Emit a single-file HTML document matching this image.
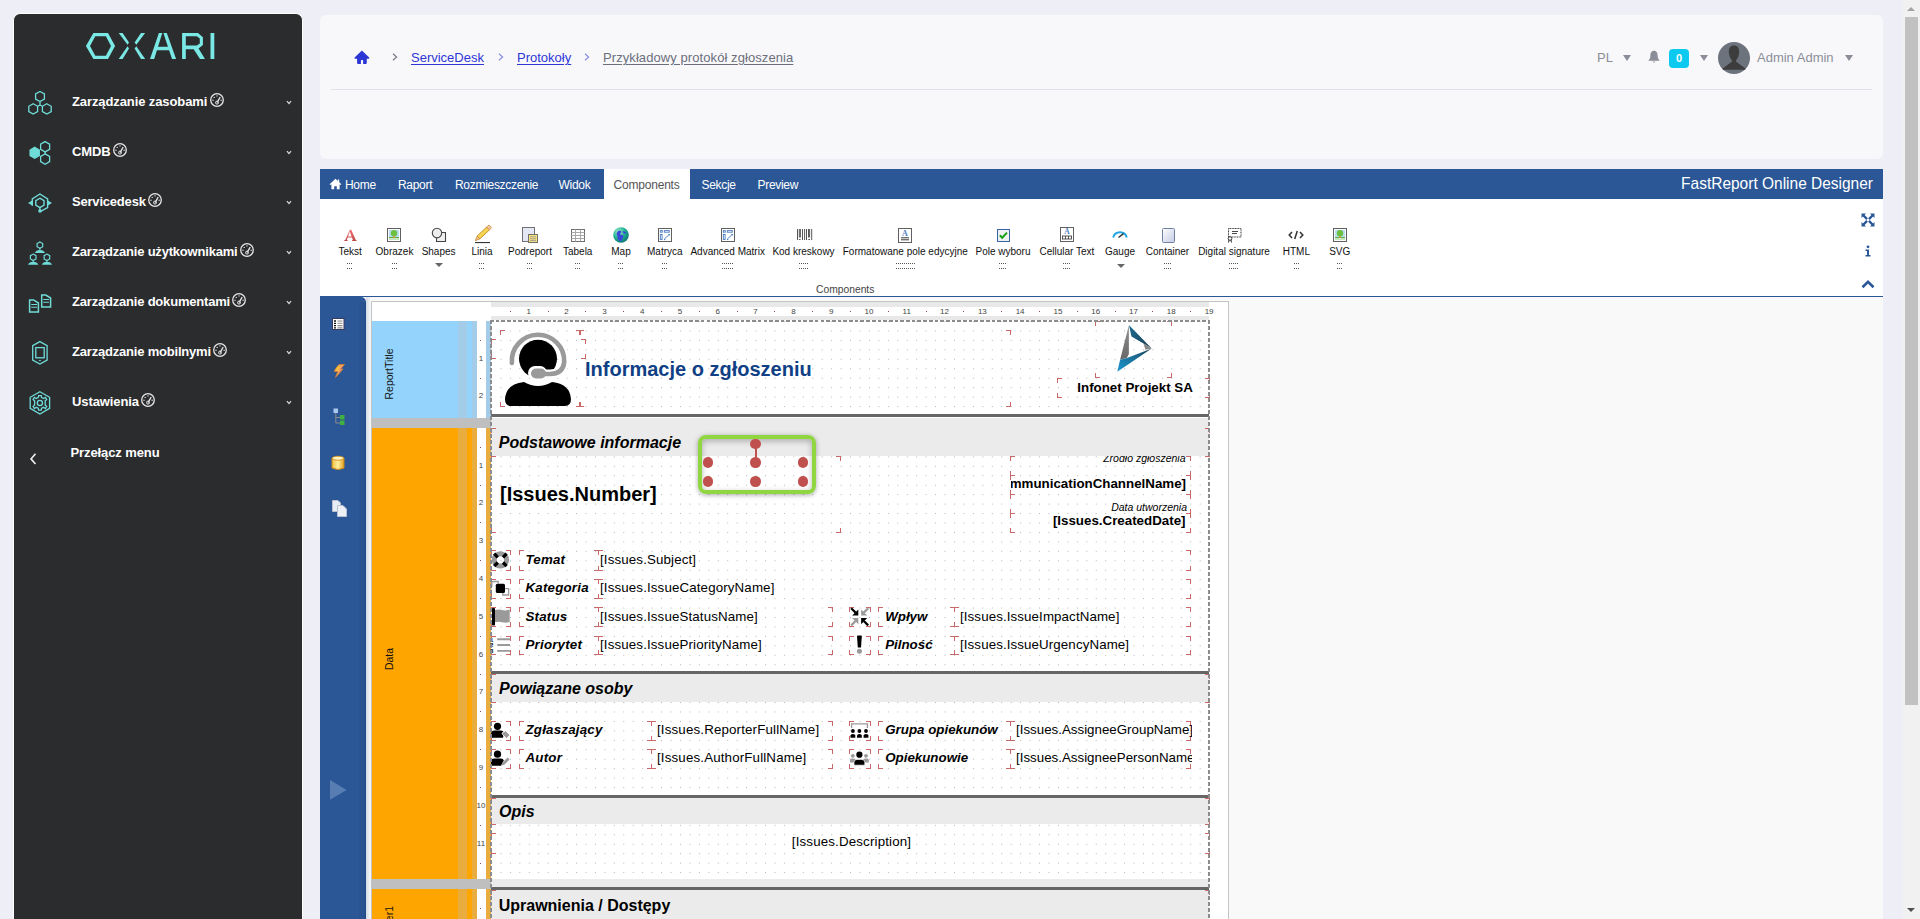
<!DOCTYPE html>
<html><head><meta charset="utf-8">
<style>
*{box-sizing:border-box;margin:0;padding:0}
html,body{width:1920px;height:919px;overflow:hidden}
body{background:#eeeef6;font-family:"Liberation Sans",sans-serif;position:relative}
.a{position:absolute}
.nw{white-space:nowrap}
/* sidebar */
#sb{left:13px;top:13px;width:290px;height:920px;background:#2b2c2e;border:1px solid #fff;border-bottom:none;border-radius:7px 7px 0 0}
.mi{position:absolute;left:72px;color:#fff;font-weight:bold;font-size:13px;letter-spacing:-0.1px;white-space:nowrap}
.chev{position:absolute;left:285px;width:6px;height:6px}
.sic{position:absolute;left:27px;width:26px;height:26px}
/* header */
#hd{left:320px;top:15px;width:1563px;height:144px;background:#f8f8fb;border-radius:6px}
.bc{position:absolute;top:50px;font-size:13px;white-space:nowrap;text-decoration:underline;text-underline-offset:1px}
/* toolbar */
#tb{left:320px;top:169px;width:1563px;height:30px;background:#2b5797}
.tab{position:absolute;top:0;height:30px;line-height:30px;color:#fff;font-size:12px;white-space:nowrap}
#rb{left:320px;top:199px;width:1563px;height:98px;background:#fff;border-bottom:1px solid #2b5797}
.ri{position:absolute;top:0;width:0}
.ri .ic{position:absolute;left:-8px;top:28px;width:16px;height:16px}
.ri .lb{position:absolute;left:-100px;width:200px;top:45px;text-align:center;font-size:10px;color:#111;white-space:nowrap}
.ri .dt{position:absolute;top:64px;height:6px;border-top:1px dotted #666;border-bottom:1px dotted #666}
.ri .dd{position:absolute;left:-5px;top:63px;width:0;height:0;border-left:5px solid transparent;border-right:5px solid transparent;border-top:5px solid #777}
/* designer */
#ds{left:320px;top:297px;width:1563px;height:622px;background:#f9f9f9}
.o{position:absolute;background:linear-gradient(#c86868,#c86868) 0 0/5px 1px no-repeat,linear-gradient(#c86868,#c86868) 0 0/1px 5px no-repeat,linear-gradient(#c86868,#c86868) 100% 0/5px 1px no-repeat,linear-gradient(#c86868,#c86868) 100% 0/1px 5px no-repeat,linear-gradient(#c86868,#c86868) 0 100%/5px 1px no-repeat,linear-gradient(#c86868,#c86868) 0 100%/1px 5px no-repeat,linear-gradient(#c86868,#c86868) 100% 100%/5px 1px no-repeat,linear-gradient(#c86868,#c86868) 100% 100%/1px 5px no-repeat}
.rn{font-size:8px;line-height:8px;color:#444}
</style></head>
<body>
<!-- SIDEBAR -->
<div id="sb" class="a"></div>
<div id="sbc" class="a" style="left:0;top:0;width:320px;height:919px">
<!-- logo -->
<svg class="a" style="left:0;top:0" width="320" height="80" viewBox="0 0 320 80"><g fill="#7ae8e4">
<path fill-rule="evenodd" d="M85.9,46 L93.4,33 H108 L115.1,46 L108,59 H93.4 Z M90,46 L95.3,36.2 H105.9 L111,46 L105.9,55.8 H95.3 Z"/>
<path d="M118.7,33 H122.6 L129,42.6 L127.6,44.8 Z"/>
<path d="M127.6,46.2 L129,48.4 L122.6,58.9 H118.7 Z"/>
<path d="M141,33 H145.1 L136.3,44.8 L134.6,42.6 Z"/>
<path d="M136.3,46.2 L134.6,48.4 L141,58.9 H145.2 Z"/>
<path d="M150,58.9 H154.2 L162.3,33 H158.9 Z"/>
<path d="M163.4,33 H166.8 L176.1,58.9 H172 Z"/>
<path d="M156.5,46.8 H169.4 L170.6,50.3 H155.4 Z"/>
<path d="M182.1,59 V33 H198 L202.9,37.2 V44.9 L198.6,48.6 L205,59 H200 L193.7,49.2 H185.8 V59 Z M185.8,36.2 V45.6 H196.8 L199.8,43.5 V38.6 L196.8,36.2 Z" fill-rule="evenodd"/>
<rect x="210.5" y="33" width="3.8" height="26"/>
</g></svg>
<!-- icons -->
<svg class="a" style="left:24px;top:86px" width="34" height="34" viewBox="0 0 34 34"><g fill="none" stroke="#6fdcd8" stroke-width="1.3">
<polygon points="16,5.5 20.4,8 20.4,13 16,15.5 11.6,13 11.6,8"/>
<polygon points="9.2,17.8 13.6,20.3 13.6,25.5 9.2,28 4.8,25.5 4.8,20.3"/>
<polygon points="22.8,17.8 27.2,20.3 27.2,25.5 22.8,28 18.4,25.5 18.4,20.3"/>
<path d="M16,15.5 V19 L13.6,20.3 M16,19 L18.4,20.3"/></g></svg>
<svg class="a" style="left:24px;top:136px" width="34" height="34" viewBox="0 0 34 34"><g fill="none" stroke="#6fdcd8" stroke-width="1.3">
<polygon points="10.7,11.3 15.3,14 15.3,19.6 10.7,22.3 6.1,19.6 6.1,14" fill="#6fdcd8"/>
<polygon points="21.1,5.6 25.6,8.2 25.6,13.3 21.1,15.9 16.6,13.3 16.6,8.2"/>
<polygon points="21.1,17.9 25.6,20.5 25.6,25.6 21.1,28.2 16.6,25.6 16.6,20.5"/>
<path d="M21.1,15.9 V17.9"/></g></svg>
<svg class="a" style="left:24px;top:186px" width="34" height="34" viewBox="0 0 34 34"><g fill="none" stroke="#6fdcd8" stroke-width="1.4">
<path d="M8.3,19.5 V13 L15.9,8 L23.6,13 V21.5 L16.5,25.3"/>
<polygon points="15.9,12.2 20,14.6 20,19.2 15.9,21.6 11.8,19.2 11.8,14.6"/>
<path d="M15.9,21.6 V24.5"/></g>
<g fill="#6fdcd8"><polygon points="4,17 9,14 9,20"/><polygon points="28,17 23,14 23,20"/><circle cx="16" cy="25" r="1.8"/></g></svg>
<svg class="a" style="left:24px;top:236px" width="34" height="34" viewBox="0 0 34 34"><g fill="none" stroke="#6fdcd8" stroke-width="1.2">
<polygon points="15.9,5.9 18.7,7.5 18.7,10.7 15.9,12.3 13.1,10.7 13.1,7.5"/>
<polygon points="9.2,18.1 12,19.7 12,22.9 9.2,24.5 6.4,22.9 6.4,19.7"/>
<polygon points="22.9,18.1 25.7,19.7 25.7,22.9 22.9,24.5 20.1,22.9 20.1,19.7"/></g>
<g fill="#6fdcd8"><path d="M10.8,17 Q12,14 15.9,14 Q19.8,14 21,17 Z"/><path d="M4,28.8 Q5.2,25.8 9.2,25.8 Q13.2,25.8 14.3,28.8 Z"/><path d="M17.8,28.8 Q19,25.8 22.9,25.8 Q26.8,25.8 28,28.8 Z"/>
<rect x="15.4" y="12" width="1" height="2"/><rect x="8.7" y="24.3" width="1" height="1.8"/><rect x="22.4" y="24.3" width="1" height="1.8"/></g></svg>
<svg class="a" style="left:24px;top:286px" width="34" height="34" viewBox="0 0 34 34"><g fill="none" stroke="#6fdcd8" stroke-width="1.5">
<path d="M5.6,26 V13.9 H9.6 L14.4,17 V26 Z"/>
<path d="M17.7,21 V9.1 H21.8 L26.6,12 V21 Z"/>
<path d="M7.2,18.5 H13 M7.2,21.3 H13 M19.3,13.5 H25 M19.3,16.3 H25" stroke-width="1.1"/></g></svg>
<svg class="a" style="left:24px;top:336px" width="34" height="34" viewBox="0 0 34 34"><g fill="none" stroke="#6fdcd8" stroke-width="1.3">
<polygon points="15.9,5.6 23.1,9.7 23.1,24 15.9,28.1 8.7,24 8.7,9.7"/>
<rect x="11.8" y="11.6" width="8.4" height="10.2"/></g><ellipse cx="15.9" cy="24.6" rx="1.2" ry="0.7" fill="#6fdcd8"/></svg>
<svg class="a" style="left:24px;top:386px" width="34" height="34" viewBox="0 0 34 34"><g fill="none" stroke="#6fdcd8" stroke-width="1.3">
<polygon points="15.9,5.8 25.6,11.3 25.6,22.4 15.9,28 6.2,22.4 6.2,11.3"/>
<circle cx="15.9" cy="16.9" r="2.6"/>
<path d="M14.6,9.6 H17.2 L17.6,11.6 L19.6,12.5 L21.4,11.3 L22.7,13.5 L21.2,14.9 V18.9 L22.7,20.3 L21.4,22.5 L19.6,21.3 L17.6,22.2 L17.2,24.2 H14.6 L14.2,22.2 L12.2,21.3 L10.4,22.5 L9.1,20.3 L10.6,18.9 V14.9 L9.1,13.5 L10.4,11.3 L12.2,12.5 L14.2,11.6 Z"/></g></svg>
<!-- labels -->
<div class="mi" style="top:95px;line-height:13px">Zarządzanie zasobami<svg width="16" height="16" viewBox="0 0 16 16" style="vertical-align:3px;margin:-5px 0 -5px 1.5px"><circle cx="8" cy="8" r="6.3" fill="none" stroke="#e6e6e6" stroke-width="1.3"/><path d="M8,10.6 L11.2,5.2" stroke="#e6e6e6" stroke-width="1.3"/><circle cx="8" cy="10.6" r="1.5" fill="none" stroke="#e6e6e6" stroke-width="1"/><circle cx="5.2" cy="5.4" r="0.7" fill="#e6e6e6"/><circle cx="8" cy="3.9" r="0.7" fill="#e6e6e6"/><circle cx="4" cy="8.3" r="0.7" fill="#e6e6e6"/><circle cx="12.1" cy="8.3" r="0.7" fill="#e6e6e6"/></svg></div>
<div class="mi" style="top:145px;line-height:13px">CMDB<svg width="16" height="16" viewBox="0 0 16 16" style="vertical-align:3px;margin:-5px 0 -5px 1.5px"><circle cx="8" cy="8" r="6.3" fill="none" stroke="#e6e6e6" stroke-width="1.3"/><path d="M8,10.6 L11.2,5.2" stroke="#e6e6e6" stroke-width="1.3"/><circle cx="8" cy="10.6" r="1.5" fill="none" stroke="#e6e6e6" stroke-width="1"/><circle cx="5.2" cy="5.4" r="0.7" fill="#e6e6e6"/><circle cx="8" cy="3.9" r="0.7" fill="#e6e6e6"/><circle cx="4" cy="8.3" r="0.7" fill="#e6e6e6"/><circle cx="12.1" cy="8.3" r="0.7" fill="#e6e6e6"/></svg></div>
<div class="mi" style="top:195px;line-height:13px;letter-spacing:-0.2px">Servicedesk<svg width="16" height="16" viewBox="0 0 16 16" style="vertical-align:3px;margin:-5px 0 -5px 1.5px"><circle cx="8" cy="8" r="6.3" fill="none" stroke="#e6e6e6" stroke-width="1.3"/><path d="M8,10.6 L11.2,5.2" stroke="#e6e6e6" stroke-width="1.3"/><circle cx="8" cy="10.6" r="1.5" fill="none" stroke="#e6e6e6" stroke-width="1"/><circle cx="5.2" cy="5.4" r="0.7" fill="#e6e6e6"/><circle cx="8" cy="3.9" r="0.7" fill="#e6e6e6"/><circle cx="4" cy="8.3" r="0.7" fill="#e6e6e6"/><circle cx="12.1" cy="8.3" r="0.7" fill="#e6e6e6"/></svg></div>
<div class="mi" style="top:245px;line-height:13px;letter-spacing:-0.2px">Zarządzanie użytkownikami<svg width="16" height="16" viewBox="0 0 16 16" style="vertical-align:3px;margin:-5px 0 -5px 1.5px"><circle cx="8" cy="8" r="6.3" fill="none" stroke="#e6e6e6" stroke-width="1.3"/><path d="M8,10.6 L11.2,5.2" stroke="#e6e6e6" stroke-width="1.3"/><circle cx="8" cy="10.6" r="1.5" fill="none" stroke="#e6e6e6" stroke-width="1"/><circle cx="5.2" cy="5.4" r="0.7" fill="#e6e6e6"/><circle cx="8" cy="3.9" r="0.7" fill="#e6e6e6"/><circle cx="4" cy="8.3" r="0.7" fill="#e6e6e6"/><circle cx="12.1" cy="8.3" r="0.7" fill="#e6e6e6"/></svg></div>
<div class="mi" style="top:295px;line-height:13px;letter-spacing:-0.2px">Zarządzanie dokumentami<svg width="16" height="16" viewBox="0 0 16 16" style="vertical-align:3px;margin:-5px 0 -5px 1.5px"><circle cx="8" cy="8" r="6.3" fill="none" stroke="#e6e6e6" stroke-width="1.3"/><path d="M8,10.6 L11.2,5.2" stroke="#e6e6e6" stroke-width="1.3"/><circle cx="8" cy="10.6" r="1.5" fill="none" stroke="#e6e6e6" stroke-width="1"/><circle cx="5.2" cy="5.4" r="0.7" fill="#e6e6e6"/><circle cx="8" cy="3.9" r="0.7" fill="#e6e6e6"/><circle cx="4" cy="8.3" r="0.7" fill="#e6e6e6"/><circle cx="12.1" cy="8.3" r="0.7" fill="#e6e6e6"/></svg></div>
<div class="mi" style="top:345px;line-height:13px;letter-spacing:-0.2px">Zarządzanie mobilnymi<svg width="16" height="16" viewBox="0 0 16 16" style="vertical-align:3px;margin:-5px 0 -5px 1.5px"><circle cx="8" cy="8" r="6.3" fill="none" stroke="#e6e6e6" stroke-width="1.3"/><path d="M8,10.6 L11.2,5.2" stroke="#e6e6e6" stroke-width="1.3"/><circle cx="8" cy="10.6" r="1.5" fill="none" stroke="#e6e6e6" stroke-width="1"/><circle cx="5.2" cy="5.4" r="0.7" fill="#e6e6e6"/><circle cx="8" cy="3.9" r="0.7" fill="#e6e6e6"/><circle cx="4" cy="8.3" r="0.7" fill="#e6e6e6"/><circle cx="12.1" cy="8.3" r="0.7" fill="#e6e6e6"/></svg></div>
<div class="mi" style="top:395px;line-height:13px">Ustawienia<svg width="16" height="16" viewBox="0 0 16 16" style="vertical-align:3px;margin:-5px 0 -5px 1.5px"><circle cx="8" cy="8" r="6.3" fill="none" stroke="#e6e6e6" stroke-width="1.3"/><path d="M8,10.6 L11.2,5.2" stroke="#e6e6e6" stroke-width="1.3"/><circle cx="8" cy="10.6" r="1.5" fill="none" stroke="#e6e6e6" stroke-width="1"/><circle cx="5.2" cy="5.4" r="0.7" fill="#e6e6e6"/><circle cx="8" cy="3.9" r="0.7" fill="#e6e6e6"/><circle cx="4" cy="8.3" r="0.7" fill="#e6e6e6"/><circle cx="12.1" cy="8.3" r="0.7" fill="#e6e6e6"/></svg></div>
<div class="mi" style="top:446px;left:70.5px;line-height:13px">Przełącz menu</div>
<svg class="a" style="left:28px;top:450px" width="10" height="18" viewBox="0 0 10 18"><path d="M7.5,3.8 L3,8.9 L7.5,14" fill="none" stroke="#f0f0f0" stroke-width="1.6"/></svg>
<svg class="a" style="left:285px;top:99px" width="8" height="6" viewBox="0 0 8 6"><path d="M2,2.2 L4,4.6 L6,2.2" fill="none" stroke="#d8d8d8" stroke-width="1.3"/></svg>
<svg class="a" style="left:285px;top:149px" width="8" height="6" viewBox="0 0 8 6"><path d="M2,2.2 L4,4.6 L6,2.2" fill="none" stroke="#d8d8d8" stroke-width="1.3"/></svg>
<svg class="a" style="left:285px;top:199px" width="8" height="6" viewBox="0 0 8 6"><path d="M2,2.2 L4,4.6 L6,2.2" fill="none" stroke="#d8d8d8" stroke-width="1.3"/></svg>
<svg class="a" style="left:285px;top:249px" width="8" height="6" viewBox="0 0 8 6"><path d="M2,2.2 L4,4.6 L6,2.2" fill="none" stroke="#d8d8d8" stroke-width="1.3"/></svg>
<svg class="a" style="left:285px;top:299px" width="8" height="6" viewBox="0 0 8 6"><path d="M2,2.2 L4,4.6 L6,2.2" fill="none" stroke="#d8d8d8" stroke-width="1.3"/></svg>
<svg class="a" style="left:285px;top:349px" width="8" height="6" viewBox="0 0 8 6"><path d="M2,2.2 L4,4.6 L6,2.2" fill="none" stroke="#d8d8d8" stroke-width="1.3"/></svg>
<svg class="a" style="left:285px;top:399px" width="8" height="6" viewBox="0 0 8 6"><path d="M2,2.2 L4,4.6 L6,2.2" fill="none" stroke="#d8d8d8" stroke-width="1.3"/></svg>
</div>

<!-- HEADER -->
<div id="hd" class="a"></div>
<svg class="a" style="left:350px;top:46px" width="24" height="22" viewBox="350 46 24 22"><path d="M361.9,50.6 L354.6,57.4 Q354,58.7 355.4,58.7 H357.1 V63.1 Q357.1,63.9 357.9,63.9 H360.9 V60.5 Q360.9,59.9 361.5,59.9 H362.5 Q363.1,59.9 363.1,60.5 V63.9 H366 Q366.8,63.9 366.8,63.1 V58.7 H368.4 Q369.8,58.7 369.2,57.4 Z" fill="#2b36d4"/></svg>
<svg class="a" style="left:390px;top:52px" width="10" height="10" viewBox="0 0 10 10"><path d="M3,1.8 L6.6,5 L3,8.2" fill="none" stroke="#777a84" stroke-width="1.2"/></svg>
<div class="a nw" style="left:411px;top:50.8px;font-size:13px;line-height:13px;color:#2f36d6;text-decoration:underline;text-underline-offset:1.5px">ServiceDesk</div>
<svg class="a" style="left:496px;top:52px" width="10" height="10" viewBox="0 0 10 10"><path d="M3,1.8 L6.6,5 L3,8.2" fill="none" stroke="#8a8fe0" stroke-width="1.2"/></svg>
<div class="a nw" style="left:517px;top:50.8px;font-size:13px;line-height:13px;color:#2f36d6;text-decoration:underline;text-underline-offset:1.5px">Protokoły</div>
<svg class="a" style="left:582px;top:52px" width="10" height="10" viewBox="0 0 10 10"><path d="M3,1.8 L6.6,5 L3,8.2" fill="none" stroke="#8a8fe0" stroke-width="1.2"/></svg>
<div class="a nw" style="left:603px;top:50.8px;font-size:13px;line-height:13px;color:#6c6f7b;letter-spacing:0.08px;text-decoration:underline;text-underline-offset:1.5px">Przykładowy protokół zgłoszenia</div>
<div class="a" style="left:331px;top:89px;width:1541px;height:1px;background:#dfe1e8"></div>
<div class="a nw" style="left:1597px;top:51px;font-size:13px;line-height:13px;color:#8b8e98">PL</div>
<div class="a" style="left:1623px;top:55px;width:0;height:0;border-left:4px solid transparent;border-right:4px solid transparent;border-top:6px solid #8b8e98"></div>
<svg class="a" style="left:1646px;top:49px" width="16" height="16" viewBox="0 0 16 16"><path d="M8,1.8 C5.2,1.8 4.4,4.2 4.4,6.5 C4.4,9.2 3.4,10.6 2.2,11.8 H13.8 C12.6,10.6 11.6,9.2 11.6,6.5 C11.6,4.2 10.8,1.8 8,1.8 Z" fill="#8b8e98"/><path d="M6.6,12.6 Q8,14.8 9.4,12.6 Z" fill="#8b8e98"/></svg>
<div class="a" style="left:1669px;top:49px;width:20px;height:19px;background:#0bc9ef;border-radius:4px;color:#fff;font-size:11px;font-weight:bold;line-height:19px;text-align:center">0</div>
<div class="a" style="left:1700px;top:55px;width:0;height:0;border-left:4px solid transparent;border-right:4px solid transparent;border-top:6px solid #8b8e98"></div>
<svg class="a" style="left:1718px;top:42px" width="32" height="32" viewBox="0 0 32 32"><defs><clipPath id="avc"><circle cx="16" cy="16" r="16"/></clipPath></defs><circle cx="16" cy="16" r="16" fill="#6c737c"/><g clip-path="url(#avc)" fill="#3d3d3d"><path d="M16,3.5 C12.4,3.5 10.8,6.2 10.8,9.6 C10.8,13.6 12.6,17 14,18.5 V19.6 L3,27.8 H29 L18,19.6 V18.5 C19.4,17 21.2,13.6 21.2,9.6 C21.2,6.2 19.6,3.5 16,3.5 Z"/></g></svg>
<div class="a nw" style="left:1757px;top:51.3px;font-size:13px;line-height:13px;color:#8b8e98">Admin Admin</div>
<div class="a" style="left:1845px;top:55px;width:0;height:0;border-left:4px solid transparent;border-right:4px solid transparent;border-top:6px solid #8b8e98"></div>


<!-- TOOLBAR -->
<div id="tb" class="a"></div>
<div id="rb" class="a"></div>
<div class="a" style="left:604px;top:169px;width:86px;height:30px;background:#fff"></div>
<svg class="a" style="left:329px;top:178px" width="13" height="12" viewBox="0 0 13 12"><path d="M6.5,0.8 L0.6,6.2 L1.5,7.1 L2.4,6.3 V11.2 H5.2 V8.2 H7.8 V11.2 H10.6 V6.3 L11.5,7.1 L12.4,6.2 L10.2,4.2 V1.4 H8.8 V2.9 Z" fill="#fff"/></svg>
<div class="a nw" style="left:345px;top:179px;font-size:12px;line-height:12px;letter-spacing:-0.3px;color:#fff">Home</div>
<div class="a nw" style="left:398px;top:179px;font-size:12px;line-height:12px;letter-spacing:-0.3px;color:#fff">Raport</div>
<div class="a nw" style="left:455px;top:179px;font-size:12px;line-height:12px;letter-spacing:-0.3px;color:#fff">Rozmieszczenie</div>
<div class="a nw" style="left:558.5px;top:179px;font-size:12px;line-height:12px;letter-spacing:-0.3px;color:#fff">Widok</div>
<div class="a nw" style="left:701.5px;top:179px;font-size:12px;line-height:12px;letter-spacing:-0.3px;color:#fff">Sekcje</div>
<div class="a nw" style="left:757.5px;top:179px;font-size:12px;line-height:12px;letter-spacing:-0.3px;color:#fff">Preview</div>
<div class="a nw" style="left:613.5px;top:179px;font-size:12px;line-height:12px;letter-spacing:-0.2px;color:#555">Components</div>
<div class="a nw" style="left:1473px;width:400px;text-align:right;top:176.4px;font-size:16.6px;line-height:16.6px;color:#fff;transform:scaleX(0.933);transform-origin:100% 50%">FastReport Online Designer</div>
<svg class="a" style="left:343px;top:228px" width="15" height="15" viewBox="0 0 15 15"><defs><linearGradient id="ga" x1="0" y1="0" x2="0" y2="1"><stop offset="0" stop-color="#f07070"/><stop offset="1" stop-color="#c04848"/></linearGradient></defs><path d="M1.2,13 H4.6 V12.3 L3.8,12.1 L4.6,9.6 H9 L9.9,12.1 L9,12.3 V13 H13.6 V12.3 L12.8,12.1 L8.2,1.8 H6.9 L2.2,12.1 L1.2,12.3 Z M5,8.4 L6.8,3.6 L8.6,8.4 Z" fill="url(#ga)"/></svg>
<div class="a nw" style="left:250.10000000000002px;top:247.2px;width:200px;text-align:center;font-size:10px;line-height:10px;color:#111">Tekst</div>
<div class="a" style="left:347px;top:263px;width:6px;height:1px;background:repeating-linear-gradient(90deg,#555 0 1px,transparent 1px 2px)"></div>
<div class="a" style="left:347px;top:268px;width:6px;height:1px;background:repeating-linear-gradient(90deg,#555 0 1px,transparent 1px 2px)"></div>
<svg class="a" style="left:387px;top:228px" width="14" height="14" viewBox="0 0 14 14"><rect x="0.5" y="0.5" width="13" height="13" fill="#fff" stroke="#606060"/><rect x="2" y="2" width="10" height="8" fill="#b8dcf6"/><rect x="2" y="9" width="10" height="3" fill="#c8e6c0"/><rect x="2" y="9" width="10" height="1" fill="#5cb040"/><circle cx="7" cy="5.3" r="3.2" fill="#6cc040"/><rect x="6.3" y="8" width="1.4" height="2" fill="#e89040"/></svg>
<div class="a nw" style="left:294.5px;top:247.2px;width:200px;text-align:center;font-size:10px;line-height:10px;color:#111">Obrazek</div>
<div class="a" style="left:391.5px;top:263px;width:5.5px;height:1px;background:repeating-linear-gradient(90deg,#555 0 1px,transparent 1px 2px)"></div>
<div class="a" style="left:391.5px;top:268px;width:5.5px;height:1px;background:repeating-linear-gradient(90deg,#555 0 1px,transparent 1px 2px)"></div>
<svg class="a" style="left:430px;top:227px" width="17" height="16" viewBox="0 0 17 16"><path d="M6.5,9.5 V14.5 H15.5 V5.5 H12" fill="#efefef" stroke="#444" stroke-width="1.1"/><circle cx="7" cy="6" r="4.7" fill="#eee" stroke="#444" stroke-width="1.1"/></svg>
<div class="a nw" style="left:338.6px;top:247.2px;width:200px;text-align:center;font-size:10px;line-height:10px;color:#111">Shapes</div>
<div class="a" style="left:435px;top:263px;width:0;height:0;border-left:4px solid transparent;border-right:4px solid transparent;border-top:4px solid #666"></div>
<svg class="a" style="left:472px;top:224px" width="22" height="22" viewBox="472 224 22 22"><path d="M477.1,236.1 L486.6,227.1 L489.4,229.9 L479.9,238.9 Z" fill="#f5d650" stroke="#c8862a" stroke-width="0.9"/><path d="M477.1,236.1 L479.9,238.9 L475.3,240.7 Z" fill="#f0c8a0" stroke="#c8862a" stroke-width="0.8"/><path d="M486.6,227.1 L488,225.7 Q489,224.9 490,225.9 L490.9,226.8 Q491.8,227.8 490.8,228.5 L489.4,229.9 Z" fill="#f6c8b0" stroke="#c8862a" stroke-width="0.8"/><rect x="475" y="242" width="15" height="1.1" fill="#333"/></svg>
<div class="a nw" style="left:382px;top:247.2px;width:200px;text-align:center;font-size:10px;line-height:10px;color:#111">Linia</div>
<div class="a" style="left:479px;top:263px;width:6px;height:1px;background:repeating-linear-gradient(90deg,#555 0 1px,transparent 1px 2px)"></div>
<div class="a" style="left:479px;top:268px;width:6px;height:1px;background:repeating-linear-gradient(90deg,#555 0 1px,transparent 1px 2px)"></div>
<svg class="a" style="left:522px;top:227px" width="17" height="17" viewBox="0 0 17 17"><rect x="0.5" y="0.5" width="12" height="14" fill="#e4e8f4" stroke="#707070"/><rect x="6.5" y="7.5" width="9" height="8" fill="#f7e27a" stroke="#707070"/><path d="M8,9.8 H14 M8,11.8 H14 M8,13.6 H14" stroke="#9a9a9a" stroke-width="0.9"/></svg>
<div class="a nw" style="left:430px;top:247.2px;width:200px;text-align:center;font-size:10px;line-height:10px;color:#111">Podreport</div>
<div class="a" style="left:527px;top:263px;width:6px;height:1px;background:repeating-linear-gradient(90deg,#555 0 1px,transparent 1px 2px)"></div>
<div class="a" style="left:527px;top:268px;width:6px;height:1px;background:repeating-linear-gradient(90deg,#555 0 1px,transparent 1px 2px)"></div>
<svg class="a" style="left:571px;top:229px" width="14" height="13" viewBox="0 0 14 13"><rect x="0.5" y="0.5" width="13" height="12" fill="#fff" stroke="#707070"/><path d="M4.5,0.5 V12.5 M9.5,0.5 V12.5 M0.5,3.5 H13.5 M0.5,6.5 H13.5 M0.5,9.5 H13.5" stroke="#a8a8a8"/></svg>
<div class="a nw" style="left:477.70000000000005px;top:247.2px;width:200px;text-align:center;font-size:10px;line-height:10px;color:#111">Tabela</div>
<div class="a" style="left:574.5px;top:263px;width:5.5px;height:1px;background:repeating-linear-gradient(90deg,#555 0 1px,transparent 1px 2px)"></div>
<div class="a" style="left:574.5px;top:268px;width:5.5px;height:1px;background:repeating-linear-gradient(90deg,#555 0 1px,transparent 1px 2px)"></div>
<svg class="a" style="left:613px;top:227px" width="16" height="16" viewBox="0 0 16 16"><defs><radialGradient id="gm" cx="0.35" cy="0.3" r="0.8"><stop offset="0" stop-color="#a0f0d0"/><stop offset="0.5" stop-color="#20b090"/><stop offset="1" stop-color="#0a6a70"/></radialGradient></defs><circle cx="8" cy="8" r="7.8" fill="url(#gm)"/><path d="M5,4 Q8,2.5 8.5,5 Q6.5,6.5 7.5,8 Q10,7 10.5,9.5 Q9.5,13 7,14.5 Q4,12 4.5,9 Q2.5,7 5,4 Z" fill="#3a48d8"/><path d="M9.5,4.5 Q12,3.5 13.5,6 Q12,7 10.5,6.5 Z" fill="#3a48d8"/></svg>
<div class="a nw" style="left:521px;top:247.2px;width:200px;text-align:center;font-size:10px;line-height:10px;color:#111">Map</div>
<div class="a" style="left:618px;top:263px;width:6px;height:1px;background:repeating-linear-gradient(90deg,#555 0 1px,transparent 1px 2px)"></div>
<div class="a" style="left:618px;top:268px;width:6px;height:1px;background:repeating-linear-gradient(90deg,#555 0 1px,transparent 1px 2px)"></div>
<svg class="a" style="left:658px;top:228px" width="14" height="14" viewBox="0 0 14 14"><rect x="0.5" y="0.5" width="13" height="13" fill="#fff" stroke="#606060"/><g fill="none" stroke="#4a7ac0" stroke-width="0.9"><rect x="2.3" y="2.6" width="2" height="1.6"/><rect x="6.3" y="2.6" width="5" height="1.6"/><rect x="2.3" y="6.5" width="1.8" height="5"/><path d="M6.5,10.8 L10.8,7"/></g><path d="M10,6 L12,6 L11.6,8 Z M5.8,10.4 L6.2,12.2 L7.8,11.6 Z" fill="#4a7ac0"/></svg>
<div class="a nw" style="left:564.8px;top:247.2px;width:200px;text-align:center;font-size:10px;line-height:10px;color:#111">Matryca</div>
<div class="a" style="left:662px;top:263px;width:5px;height:1px;background:repeating-linear-gradient(90deg,#555 0 1px,transparent 1px 2px)"></div>
<div class="a" style="left:662px;top:268px;width:5px;height:1px;background:repeating-linear-gradient(90deg,#555 0 1px,transparent 1px 2px)"></div>
<svg class="a" style="left:721px;top:228px" width="14" height="14" viewBox="0 0 14 14"><rect x="0.5" y="0.5" width="13" height="13" fill="#fff" stroke="#606060"/><g fill="none" stroke="#4a7ac0" stroke-width="0.9"><rect x="2.3" y="2.6" width="2" height="1.6"/><rect x="6.3" y="2.6" width="5" height="1.6"/><rect x="2.3" y="6.5" width="1.8" height="5"/><path d="M6.5,10.8 L10.8,7"/></g><path d="M10,6 L12,6 L11.6,8 Z M5.8,10.4 L6.2,12.2 L7.8,11.6 Z" fill="#4a7ac0"/></svg>
<div class="a nw" style="left:627.7px;top:247.2px;width:200px;text-align:center;font-size:10px;line-height:10px;color:#111">Advanced Matrix</div>
<div class="a" style="left:722px;top:263px;width:11px;height:1px;background:repeating-linear-gradient(90deg,#555 0 1px,transparent 1px 2px)"></div>
<div class="a" style="left:722px;top:268px;width:11px;height:1px;background:repeating-linear-gradient(90deg,#555 0 1px,transparent 1px 2px)"></div>
<svg class="a" style="left:797px;top:229px" width="16" height="12" viewBox="0 0 16 12"><path d="M0.5,0 V11 M2.3,0 V8.5 M3.4,0 V8.5 M5.5,0 V11 M7.6,0 V11 M9.5,0 V11 M11.5,0 V8.5 M12.6,0 V8.5 M14.7,0 V11" stroke="#444" stroke-width="0.9"/><path d="M2,10.5 H3.6 M11.3,10.5 H13" stroke="#444" stroke-width="0.9"/></svg>
<div class="a nw" style="left:703.5px;top:247.2px;width:200px;text-align:center;font-size:10px;line-height:10px;color:#111">Kod kreskowy</div>
<div class="a" style="left:799px;top:263px;width:9px;height:1px;background:repeating-linear-gradient(90deg,#555 0 1px,transparent 1px 2px)"></div>
<div class="a" style="left:799px;top:268px;width:9px;height:1px;background:repeating-linear-gradient(90deg,#555 0 1px,transparent 1px 2px)"></div>
<svg class="a" style="left:898px;top:228px" width="15" height="15" viewBox="0 0 15 15"><rect x="0.5" y="0.5" width="13" height="14" fill="#fff" stroke="#606060"/><text x="7" y="8" font-family="Liberation Serif" font-size="8" font-weight="bold" fill="#5080c0" text-anchor="middle">A</text><path d="M3,9.8 H11 M3,11.8 H11" stroke="#222" stroke-width="0.9"/></svg>
<div class="a nw" style="left:805.3px;top:247.2px;width:200px;text-align:center;font-size:10px;line-height:10px;color:#111">Formatowane pole edycyjne</div>
<div class="a" style="left:896px;top:263px;width:19px;height:1px;background:repeating-linear-gradient(90deg,#555 0 1px,transparent 1px 2px)"></div>
<div class="a" style="left:896px;top:268px;width:19px;height:1px;background:repeating-linear-gradient(90deg,#555 0 1px,transparent 1px 2px)"></div>
<svg class="a" style="left:997px;top:229px" width="13" height="13" viewBox="0 0 13 13"><rect x="0.5" y="0.5" width="12" height="12" fill="#eef0f2" stroke="#3a64a8"/><path d="M2.8,6.2 L5.2,8.8 L10,3.6" fill="none" stroke="#18a018" stroke-width="2"/></svg>
<div class="a nw" style="left:903px;top:247.2px;width:200px;text-align:center;font-size:10px;line-height:10px;color:#111">Pole wyboru</div>
<div class="a" style="left:999px;top:263px;width:8px;height:1px;background:repeating-linear-gradient(90deg,#555 0 1px,transparent 1px 2px)"></div>
<div class="a" style="left:999px;top:268px;width:8px;height:1px;background:repeating-linear-gradient(90deg,#555 0 1px,transparent 1px 2px)"></div>
<svg class="a" style="left:1060px;top:227px" width="14" height="15" viewBox="0 0 14 15"><rect x="0.5" y="0.5" width="13" height="14" fill="#fff" stroke="#606060"/><text x="7" y="7" font-family="Liberation Serif" font-size="7.5" font-weight="bold" fill="#5080c0" text-anchor="middle">A</text><g fill="none" stroke="#444" stroke-width="0.9"><rect x="2.5" y="9" width="9" height="3"/><path d="M5.5,9 V12 M8.5,9 V12"/></g></svg>
<div class="a nw" style="left:966.9000000000001px;top:247.2px;width:200px;text-align:center;font-size:10px;line-height:10px;color:#111">Cellular Text</div>
<div class="a" style="left:1063px;top:263px;width:8px;height:1px;background:repeating-linear-gradient(90deg,#555 0 1px,transparent 1px 2px)"></div>
<div class="a" style="left:1063px;top:268px;width:8px;height:1px;background:repeating-linear-gradient(90deg,#555 0 1px,transparent 1px 2px)"></div>
<svg class="a" style="left:1112px;top:229px" width="16" height="10" viewBox="0 0 16 10"><path d="M1.2,8.6 A7,7 0 0 1 14.8,8.6" fill="none" stroke="#1ea6e0" stroke-width="2"/><path d="M6.5,8.5 L11.5,4.6" stroke="#333" stroke-width="1.5"/></svg>
<div class="a nw" style="left:1020px;top:247.2px;width:200px;text-align:center;font-size:10px;line-height:10px;color:#111">Gauge</div>
<div class="a" style="left:1116.5px;top:263.5px;width:0;height:0;border-left:4px solid transparent;border-right:4px solid transparent;border-top:4px solid #666"></div>
<svg class="a" style="left:1162px;top:228px" width="13" height="15" viewBox="0 0 13 15"><defs><linearGradient id="gc" x1="0" y1="0" x2="1" y2="1"><stop offset="0" stop-color="#fff"/><stop offset="1" stop-color="#c4cce4"/></linearGradient></defs><rect x="0.5" y="0.5" width="12" height="14" rx="1" fill="url(#gc)" stroke="#7080a0"/></svg>
<div class="a nw" style="left:1067.5px;top:247.2px;width:200px;text-align:center;font-size:10px;line-height:10px;color:#111">Container</div>
<div class="a" style="left:1164px;top:263px;width:7px;height:1px;background:repeating-linear-gradient(90deg,#555 0 1px,transparent 1px 2px)"></div>
<div class="a" style="left:1164px;top:268px;width:7px;height:1px;background:repeating-linear-gradient(90deg,#555 0 1px,transparent 1px 2px)"></div>
<svg class="a" style="left:1227px;top:228px" width="15" height="15" viewBox="0 0 15 15"><rect x="1.5" y="0.5" width="12.5" height="8.5" fill="#fff" stroke="#333" stroke-dasharray="1 0.6"/><path d="M5,3.5 H11 M5,5.5 H10" stroke="#333" stroke-width="0.9"/><circle cx="3" cy="10.5" r="1.8" fill="#fff" stroke="#333" stroke-width="1"/><path d="M2,12 L1.5,14.5 M4,12 L4.5,14.5" stroke="#333" stroke-width="1"/></svg>
<div class="a nw" style="left:1134px;top:247.2px;width:200px;text-align:center;font-size:10px;line-height:10px;color:#111">Digital signature</div>
<div class="a" style="left:1229px;top:263px;width:10px;height:1px;background:repeating-linear-gradient(90deg,#555 0 1px,transparent 1px 2px)"></div>
<div class="a" style="left:1229px;top:268px;width:10px;height:1px;background:repeating-linear-gradient(90deg,#555 0 1px,transparent 1px 2px)"></div>
<svg class="a" style="left:1288px;top:230px" width="16" height="10" viewBox="0 0 16 10"><path d="M4,2 L1.2,5 L4,8 M12,2 L14.8,5 L12,8 M9.3,1 L6.7,9" fill="none" stroke="#333" stroke-width="1.5"/></svg>
<div class="a nw" style="left:1196.4px;top:247.2px;width:200px;text-align:center;font-size:10px;line-height:10px;color:#111">HTML</div>
<div class="a" style="left:1294px;top:263px;width:5px;height:1px;background:repeating-linear-gradient(90deg,#555 0 1px,transparent 1px 2px)"></div>
<div class="a" style="left:1294px;top:268px;width:5px;height:1px;background:repeating-linear-gradient(90deg,#555 0 1px,transparent 1px 2px)"></div>
<svg class="a" style="left:1333px;top:228px" width="14" height="14" viewBox="0 0 14 14"><rect x="0.5" y="0.5" width="13" height="13" fill="#fff" stroke="#606060"/><rect x="2" y="2" width="10" height="8" fill="#b8dcf6"/><rect x="2" y="9" width="10" height="3" fill="#c8e6c0"/><rect x="2" y="9" width="10" height="1" fill="#5cb040"/><circle cx="7" cy="5.3" r="3.2" fill="#6cc040"/><rect x="6.3" y="8" width="1.4" height="2" fill="#e89040"/></svg>
<div class="a nw" style="left:1239.7px;top:247.2px;width:200px;text-align:center;font-size:10px;line-height:10px;color:#111">SVG</div>
<div class="a" style="left:1337px;top:263px;width:5px;height:1px;background:repeating-linear-gradient(90deg,#555 0 1px,transparent 1px 2px)"></div>
<div class="a" style="left:1337px;top:268px;width:5px;height:1px;background:repeating-linear-gradient(90deg,#555 0 1px,transparent 1px 2px)"></div>
<div class="a nw" style="left:816px;top:284.5px;font-size:10.3px;line-height:10px;color:#444">Components</div>
<svg class="a" style="left:1861px;top:213px" width="14" height="14" viewBox="0 0 14 14"><g fill="#2b5797"><path d="M0.5,0.5 H5 L3.6,1.9 L6.9,5.2 L5.2,6.9 L1.9,3.6 L0.5,5 Z"/><path d="M13.5,0.5 V5 L12.1,3.6 L8.8,6.9 L7.1,5.2 L10.4,1.9 L9,0.5 Z"/><path d="M0.5,13.5 V9 L1.9,10.4 L5.2,7.1 L6.9,8.8 L3.6,12.1 L5,13.5 Z"/><path d="M13.5,13.5 H9 L10.4,12.1 L7.1,8.8 L8.8,7.1 L12.1,10.4 L13.5,9 Z"/></g></svg>
<svg class="a" style="left:1864px;top:245px" width="8" height="12" viewBox="0 0 8 12"><circle cx="4" cy="1.8" r="1.4" fill="#2b5797"/><path d="M1.5,4.5 H5 V10 H6.5 V11.5 H1.5 V10 H3 V6 H1.5 Z" fill="#2b5797"/></svg>
<svg class="a" style="left:1861px;top:279px" width="14" height="10" viewBox="0 0 14 10"><path d="M1.5,8.2 L7,2.8 L12.5,8.2" fill="none" stroke="#2b5797" stroke-width="2.6"/></svg>

<!-- DESIGNER -->
<div id="ds" class="a"></div>
<div class="a" style="left:320px;top:297px;width:46px;height:622px;background:#2b5797;border-top-right-radius:5px"></div>
<div class="a" style="left:359px;top:302px;width:6px;height:617px;background:#2a5190"></div>
<div class="a" style="left:365px;top:302px;width:1px;height:617px;background:#214a88"></div>
<div class="a" style="left:366px;top:297px;width:5px;height:622px;background:linear-gradient(90deg,#d4dae4,#f9f9f9)"></div>
<svg class="a" style="left:332px;top:318px" width="13" height="13" viewBox="0 0 13 13"><rect x="0.5" y="0.5" width="11.5" height="11" fill="#fff" stroke="#3a3a5a"/><path d="M2,3 H4 M2,5.3 H4 M2,7.6 H4 M2,9.9 H4" stroke="#111" stroke-width="1.3"/><path d="M5.5,3 H10.5 M5.5,5.3 H10.5 M5.5,7.6 H10.5 M5.5,9.9 H10.5" stroke="#888" stroke-width="1.1"/></svg>
<svg class="a" style="left:333px;top:364px" width="12" height="14" viewBox="0 0 12 14"><path d="M6,0.5 H11.5 L7.5,5 H10 L2.5,13.5 L4.8,7.5 H1.2 L3,4 Z" fill="#f4c040" stroke="#d07830" stroke-width="0.8"/><path d="M6.2,2 H9.5 L6,5.8 H8 L4.5,10" fill="none" stroke="#f08080" stroke-width="1"/></svg>
<svg class="a" style="left:333px;top:408px" width="12" height="17" viewBox="0 0 12 17"><rect x="0.5" y="0.5" width="4.5" height="4.5" fill="#a8c8f0"/><path d="M2.8,5 V15 H7 M2.8,9.5 H7" fill="none" stroke="#8a8a8a" stroke-width="1"/><rect x="7" y="7" width="4.5" height="4.5" fill="#40b040"/><rect x="7" y="12.5" width="4.5" height="4.5" fill="#40b040"/></svg>
<svg class="a" style="left:331px;top:455px" width="14" height="16" viewBox="0 0 14 16"><defs><linearGradient id="gdb" x1="0" y1="0" x2="1" y2="0"><stop offset="0" stop-color="#f0c040"/><stop offset="0.5" stop-color="#fff0a0"/><stop offset="1" stop-color="#e0a020"/></linearGradient></defs><path d="M1,3 V13 Q7,16 13,13 V3 Q7,0 1,3 Z" fill="url(#gdb)" stroke="#c88818" stroke-width="1"/><ellipse cx="7" cy="3.2" rx="5.8" ry="2" fill="#fff4c0" stroke="#c88818" stroke-width="0.8"/></svg>
<svg class="a" style="left:332px;top:500px" width="17" height="17" viewBox="0 0 17 17"><path d="M0.5,0.5 H6 L8.5,3 V11.5 H0.5 Z" fill="#e8ecf4" stroke="#b8c0d0"/><path d="M5.5,5.5 H11 L14.5,9 V16.5 H5.5 Z" fill="#eef0f8" stroke="#b8c0d0"/></svg>
<svg class="a" style="left:329px;top:779px" width="19" height="22" viewBox="0 0 19 22"><path d="M1,1 L17.6,11 L1,20.8 Z" fill="#587db3"/></svg>
<div class="a" style="left:371px;top:301px;width:858px;height:618px;background:#fff;border:1px solid #c4c4c4;border-bottom:none"></div>
<div class="a" style="left:491px;top:302px;width:718px;height:4.5px;background:#e8e8e8"></div>
<div class="a" style="left:491px;top:316px;width:718px;height:4px;background:#e8e8e8"></div>
<div class="a nw rn" style="left:518.79px;width:20px;text-align:center;top:307.8px">1</div>
<div class="a" style="left:510px;top:311px;width:1px;height:1px;background:#8a4a6a"></div>
<div class="a nw rn" style="left:556.59px;width:20px;text-align:center;top:307.8px">2</div>
<div class="a" style="left:548px;top:311px;width:1px;height:1px;background:#8a4a6a"></div>
<div class="a nw rn" style="left:594.38px;width:20px;text-align:center;top:307.8px">3</div>
<div class="a" style="left:585px;top:311px;width:1px;height:1px;background:#8a4a6a"></div>
<div class="a nw rn" style="left:632.18px;width:20px;text-align:center;top:307.8px">4</div>
<div class="a" style="left:623px;top:311px;width:1px;height:1px;background:#8a4a6a"></div>
<div class="a nw rn" style="left:669.98px;width:20px;text-align:center;top:307.8px">5</div>
<div class="a" style="left:661px;top:311px;width:1px;height:1px;background:#8a4a6a"></div>
<div class="a nw rn" style="left:707.77px;width:20px;text-align:center;top:307.8px">6</div>
<div class="a" style="left:699px;top:311px;width:1px;height:1px;background:#8a4a6a"></div>
<div class="a nw rn" style="left:745.57px;width:20px;text-align:center;top:307.8px">7</div>
<div class="a" style="left:737px;top:311px;width:1px;height:1px;background:#8a4a6a"></div>
<div class="a nw rn" style="left:783.36px;width:20px;text-align:center;top:307.8px">8</div>
<div class="a" style="left:774px;top:311px;width:1px;height:1px;background:#8a4a6a"></div>
<div class="a nw rn" style="left:821.15px;width:20px;text-align:center;top:307.8px">9</div>
<div class="a" style="left:812px;top:311px;width:1px;height:1px;background:#8a4a6a"></div>
<div class="a nw rn" style="left:858.95px;width:20px;text-align:center;top:307.8px">10</div>
<div class="a" style="left:850px;top:311px;width:1px;height:1px;background:#8a4a6a"></div>
<div class="a nw rn" style="left:896.75px;width:20px;text-align:center;top:307.8px">11</div>
<div class="a" style="left:888px;top:311px;width:1px;height:1px;background:#8a4a6a"></div>
<div class="a nw rn" style="left:934.54px;width:20px;text-align:center;top:307.8px">12</div>
<div class="a" style="left:926px;top:311px;width:1px;height:1px;background:#8a4a6a"></div>
<div class="a nw rn" style="left:972.34px;width:20px;text-align:center;top:307.8px">13</div>
<div class="a" style="left:963px;top:311px;width:1px;height:1px;background:#8a4a6a"></div>
<div class="a nw rn" style="left:1010.13px;width:20px;text-align:center;top:307.8px">14</div>
<div class="a" style="left:1001px;top:311px;width:1px;height:1px;background:#8a4a6a"></div>
<div class="a nw rn" style="left:1047.93px;width:20px;text-align:center;top:307.8px">15</div>
<div class="a" style="left:1039px;top:311px;width:1px;height:1px;background:#8a4a6a"></div>
<div class="a nw rn" style="left:1085.72px;width:20px;text-align:center;top:307.8px">16</div>
<div class="a" style="left:1077px;top:311px;width:1px;height:1px;background:#8a4a6a"></div>
<div class="a nw rn" style="left:1123.51px;width:20px;text-align:center;top:307.8px">17</div>
<div class="a" style="left:1115px;top:311px;width:1px;height:1px;background:#8a4a6a"></div>
<div class="a nw rn" style="left:1161.31px;width:20px;text-align:center;top:307.8px">18</div>
<div class="a" style="left:1152px;top:311px;width:1px;height:1px;background:#8a4a6a"></div>
<div class="a nw rn" style="left:1199.11px;width:20px;text-align:center;top:307.8px">19</div>
<div class="a" style="left:1190px;top:311px;width:1px;height:1px;background:#8a4a6a"></div>
<div class="a" style="left:372px;top:321px;width:119px;height:97px;background:#94d4fc"></div>
<div class="a" style="left:458px;top:321px;width:9px;height:97px;background:#a2cce8"></div>
<div class="a" style="left:472px;top:321px;width:5px;height:97px;background:#a2cce8"></div>
<div class="a" style="left:477px;top:321px;width:9px;height:97px;background:#fff"></div>
<div class="a" style="left:486px;top:321px;width:5px;height:97px;background:#a2cce8"></div>
<div class="a" style="left:372px;top:418px;width:119px;height:10px;background:#bfbfbf"></div>
<div class="a" style="left:372px;top:428px;width:119px;height:451px;background:#ffa500"></div>
<div class="a" style="left:458px;top:428px;width:9px;height:451px;background:#e9ac3e"></div>
<div class="a" style="left:472px;top:428px;width:5px;height:451px;background:#e9ac3e"></div>
<div class="a" style="left:477px;top:428px;width:9px;height:451px;background:#fff"></div>
<div class="a" style="left:486px;top:428px;width:5px;height:451px;background:#e9ac3e"></div>
<div class="a" style="left:372px;top:879px;width:119px;height:10px;background:#bfbfbf"></div>
<div class="a" style="left:372px;top:889px;width:119px;height:30px;background:#ffa500"></div>
<div class="a" style="left:458px;top:889px;width:9px;height:30px;background:#e9ac3e"></div>
<div class="a" style="left:472px;top:889px;width:5px;height:30px;background:#e9ac3e"></div>
<div class="a" style="left:477px;top:889px;width:9px;height:30px;background:#fff"></div>
<div class="a" style="left:486px;top:889px;width:5px;height:30px;background:#e9ac3e"></div>
<div class="a nw rn" style="left:471px;width:20px;text-align:center;top:354.60px">1</div>
<div class="a nw rn" style="left:471px;width:20px;text-align:center;top:392.39px">2</div>
<div class="a" style="left:480px;top:340px;width:1px;height:1px;background:#8a4a6a"></div>
<div class="a" style="left:480px;top:378px;width:1px;height:1px;background:#8a4a6a"></div>
<div class="a nw rn" style="left:471px;width:20px;text-align:center;top:461.60px">1</div>
<div class="a nw rn" style="left:471px;width:20px;text-align:center;top:499.39px">2</div>
<div class="a nw rn" style="left:471px;width:20px;text-align:center;top:537.18px">3</div>
<div class="a nw rn" style="left:471px;width:20px;text-align:center;top:574.98px">4</div>
<div class="a nw rn" style="left:471px;width:20px;text-align:center;top:612.77px">5</div>
<div class="a nw rn" style="left:471px;width:20px;text-align:center;top:650.57px">6</div>
<div class="a nw rn" style="left:471px;width:20px;text-align:center;top:688.37px">7</div>
<div class="a nw rn" style="left:471px;width:20px;text-align:center;top:726.16px">8</div>
<div class="a nw rn" style="left:471px;width:20px;text-align:center;top:763.95px">9</div>
<div class="a nw rn" style="left:471px;width:20px;text-align:center;top:801.75px">10</div>
<div class="a nw rn" style="left:471px;width:20px;text-align:center;top:839.54px">11</div>
<div class="a" style="left:480px;top:447px;width:1px;height:1px;background:#8a4a6a"></div>
<div class="a" style="left:480px;top:485px;width:1px;height:1px;background:#8a4a6a"></div>
<div class="a" style="left:480px;top:522px;width:1px;height:1px;background:#8a4a6a"></div>
<div class="a" style="left:480px;top:560px;width:1px;height:1px;background:#8a4a6a"></div>
<div class="a" style="left:480px;top:598px;width:1px;height:1px;background:#8a4a6a"></div>
<div class="a" style="left:480px;top:636px;width:1px;height:1px;background:#8a4a6a"></div>
<div class="a" style="left:480px;top:674px;width:1px;height:1px;background:#8a4a6a"></div>
<div class="a" style="left:480px;top:711px;width:1px;height:1px;background:#8a4a6a"></div>
<div class="a" style="left:480px;top:749px;width:1px;height:1px;background:#8a4a6a"></div>
<div class="a" style="left:480px;top:787px;width:1px;height:1px;background:#8a4a6a"></div>
<div class="a" style="left:480px;top:825px;width:1px;height:1px;background:#8a4a6a"></div>
<div class="a" style="left:480px;top:863px;width:1px;height:1px;background:#8a4a6a"></div>
<div class="a nw rn" style="left:471px;width:20px;text-align:center;top:922.59px">1</div>
<div class="a" style="left:480px;top:908px;width:1px;height:1px;background:#8a4a6a"></div>
<div class="a nw" style="left:328.5px;top:367.3px;width:120px;height:14px;text-align:center;font-size:10.5px;line-height:14px;color:#111;transform:rotate(-90deg)">ReportTitle</div>
<div class="a nw" style="left:328.5px;top:651.6px;width:120px;height:14px;text-align:center;font-size:10.5px;line-height:14px;color:#111;transform:rotate(-90deg)">Data</div>
<div class="a" style="left:372px;top:889px;width:86px;height:30px;overflow:hidden"><div class="a nw" style="left:-43.5px;top:69.8px;width:120px;height:14px;text-align:right;font-size:10.5px;line-height:14px;color:#111;transform:rotate(-90deg)">DataHeader1</div></div>
<svg class="a" style="left:491px;top:321px" width="718" height="97"><defs><pattern id="gp321" x="0" y="0" width="9.449" height="9.449" patternUnits="userSpaceOnUse"><rect x="0" y="0" width="1" height="1" fill="#b4b4b4"/></pattern></defs><rect width="718" height="97" fill="url(#gp321)"/></svg>
<div class="a" style="left:491px;top:414px;width:718px;height:3px;background:#666"></div>
<div class="a" style="left:491px;top:418px;width:718px;height:10px;background:#ebebeb"></div>
<svg class="a" style="left:491px;top:428px" width="718" height="451"><defs><pattern id="gp428" x="0" y="0" width="9.449" height="9.449" patternUnits="userSpaceOnUse"><rect x="0" y="0" width="1" height="1" fill="#b4b4b4"/></pattern></defs><rect width="718" height="451" fill="url(#gp428)"/></svg>
<div class="a" style="left:491px;top:879px;width:718px;height:10px;background:#ebebeb"></div>
<div class="a" style="left:491px;top:887px;width:718px;height:3px;background:#666"></div>
<div class="a" style="left:491px;top:890px;width:718px;height:29px;background:#ebebeb"></div>
<svg class="a" style="left:488px;top:318px" width="100" height="100" viewBox="488 318 100 100"><circle cx="538" cy="358.7" r="19" fill="#000"/><path d="M511.9,363 A26.2,26.2 0 1 1 564.2,362 Q563,374 550,374 H538" fill="none" stroke="#fff" stroke-width="9"/><rect x="528" y="366" width="19" height="14" rx="7" fill="#fff"/><path d="M511.9,363 A26.2,26.2 0 1 1 564.2,362 Q563,374 550,374 H538" fill="none" stroke="#9a9a9a" stroke-width="4.6" stroke-linecap="round"/><rect x="531" y="368.5" width="15" height="10" rx="5" fill="#9a9a9a"/><path d="M505,399 Q506,384 524,382 Q531,386 538,386 Q545,386 552,382 Q570,384 571,399 Q571,406 565,406 H511 Q505,406 505,399 Z" fill="#000"/></svg>
<div class="o" style="left:491px;top:339px;width:95px;height:20px"></div>
<div class="o" style="left:500px;top:330px;width:81px;height:77px"></div>
<div class="a nw" style="left:585px;top:358.67px;font-size:20px;line-height:20px;color:#103f85;font-weight:bold;">Informacje o zgłoszeniu</div>
<div class="o" style="left:579px;top:330px;width:432px;height:77px"></div>
<svg class="a" style="left:1110px;top:320px" width="50" height="58" viewBox="1110 320 50 58"><defs><linearGradient id="lg1" x1="0" y1="0" x2="0" y2="1"><stop offset="0" stop-color="#9a9a9a"/><stop offset="0.5" stop-color="#7a7a7a"/><stop offset="1" stop-color="#6a6a6a"/></linearGradient><linearGradient id="lg2" x1="0" y1="1" x2="1" y2="0"><stop offset="0" stop-color="#1a98d0"/><stop offset="0.6" stop-color="#1c6a90"/><stop offset="1" stop-color="#1a4050"/></linearGradient><linearGradient id="lg3" x1="0" y1="0" x2="1" y2="1"><stop offset="0" stop-color="#1a6f96"/><stop offset="1" stop-color="#1e3c4c"/></linearGradient></defs><path d="M1128.9,325 L1120.1,359.8 L1126.8,357.9 L1128.9,354.1 Z" fill="url(#lg1)"/><path d="M1120.1,359.8 L1127,357.9 L1151.7,348.4 L1117.3,371.8 Z" fill="url(#lg2)"/><path d="M1128.9,325 L1151.7,348.4 L1143.5,343.4 L1131.5,336.4 Z" fill="url(#lg3)"/><path d="M1143.5,343.4 L1151.7,348.4 L1145.4,349.7 Z" fill="#888"/></svg>
<div class="o" style="left:1095px;top:321px;width:77px;height:57px"></div>
<div class="a nw" style="left:1077.3px;top:381.22px;font-size:13.33px;line-height:13.33px;color:#000;font-weight:bold;">Infonet Projekt SA</div>
<div class="o" style="left:1057px;top:378px;width:153px;height:20px"></div>
<div class="a" style="left:491px;top:428px;width:718px;height:28px;background:#ebebeb"></div>
<div class="a nw" style="left:498.8px;top:435.46px;font-size:16px;line-height:16px;color:#000;font-weight:bold;font-style:italic;">Podstawowe informacje</div>
<div class="o" style="left:491px;top:428px;width:719px;height:29px"></div>
<div class="a nw" style="left:500px;top:484.07px;font-size:20px;line-height:20px;color:#000;font-weight:bold;">[Issues.Number]</div>
<div class="o" style="left:491px;top:456px;width:350px;height:77px"></div>
<div class="a" style="left:1010px;top:456px;width:181px;height:19px;overflow:hidden"><div class="a nw" style="right:5.5px;top:-4.4px;font-size:10.5px;line-height:12px;font-style:italic;color:#000">Źródło zgłoszenia</div></div>
<div class="o" style="left:1010px;top:456px;width:181px;height:20px"></div>
<div class="a" style="left:1011px;top:475px;width:180px;height:19px;overflow:hidden"><div class="a nw" style="right:5px;top:1.7px;font-size:13.33px;line-height:13.33px;font-weight:bold;color:#000">[Issues.CommunicationChannelName]</div></div>
<div class="o" style="left:1010px;top:475px;width:181px;height:20px"></div>
<div class="a nw" style="left:587px;width:600px;text-align:right;top:502.21px;font-size:10.5px;line-height:10.5px;color:#000;font-style:italic;">Data utworzenia</div>
<div class="o" style="left:1010px;top:494px;width:181px;height:20px"></div>
<div class="a nw" style="left:585.5px;width:600px;text-align:right;top:514.42px;font-size:13.33px;line-height:13.33px;color:#000;font-weight:bold;">[Issues.CreatedDate]</div>
<div class="o" style="left:1010px;top:513px;width:181px;height:20px"></div>
<div class="o" style="left:491px;top:550px;width:20px;height:21px"></div>
<div class="o" style="left:519px;top:550px;width:80px;height:21px"></div>
<div class="a nw" style="left:525.5px;top:553.02px;font-size:13.33px;line-height:13.33px;color:#000;font-weight:bold;font-style:italic;letter-spacing:0.2px;">Temat</div>
<div class="o" style="left:598px;top:550px;width:593px;height:21px"></div>
<div class="a nw" style="left:600px;top:553.02px;font-size:13.33px;line-height:13.33px;color:#000;letter-spacing:0.13px;">[Issues.Subject]</div>
<div class="o" style="left:491px;top:579px;width:20px;height:20px"></div>
<div class="o" style="left:519px;top:579px;width:80px;height:20px"></div>
<div class="a nw" style="left:525.5px;top:581.32px;font-size:13.33px;line-height:13.33px;color:#000;font-weight:bold;font-style:italic;letter-spacing:0.2px;">Kategoria</div>
<div class="o" style="left:598px;top:579px;width:593px;height:20px"></div>
<div class="a nw" style="left:600px;top:581.32px;font-size:13.33px;line-height:13.33px;color:#000;letter-spacing:0.13px;">[Issues.IssueCategoryName]</div>
<div class="o" style="left:491px;top:607px;width:20px;height:20px"></div>
<div class="o" style="left:519px;top:607px;width:80px;height:20px"></div>
<div class="a nw" style="left:525.5px;top:609.72px;font-size:13.33px;line-height:13.33px;color:#000;font-weight:bold;font-style:italic;letter-spacing:0.2px;">Status</div>
<div class="o" style="left:598px;top:607px;width:235px;height:20px"></div>
<div class="a nw" style="left:600px;top:609.72px;font-size:13.33px;line-height:13.33px;color:#000;letter-spacing:0.13px;">[Issues.IssueStatusName]</div>
<div class="o" style="left:491px;top:636px;width:20px;height:19px"></div>
<div class="o" style="left:519px;top:636px;width:80px;height:19px"></div>
<div class="a nw" style="left:525.5px;top:638.02px;font-size:13.33px;line-height:13.33px;color:#000;font-weight:bold;font-style:italic;letter-spacing:0.2px;">Priorytet</div>
<div class="o" style="left:598px;top:636px;width:235px;height:19px"></div>
<div class="a nw" style="left:600px;top:638.02px;font-size:13.33px;line-height:13.33px;color:#000;letter-spacing:0.13px;">[Issues.IssuePriorityName]</div>
<div class="o" style="left:849px;top:607px;width:22px;height:20px"></div>
<div class="o" style="left:878px;top:607px;width:77px;height:20px"></div>
<div class="a nw" style="left:885.2px;top:609.72px;font-size:13.33px;line-height:13.33px;color:#000;font-weight:bold;font-style:italic;">Wpływ</div>
<div class="o" style="left:954px;top:607px;width:237px;height:20px"></div>
<div class="a nw" style="left:960px;top:609.72px;font-size:13.33px;line-height:13.33px;color:#000;letter-spacing:0.1px;">[Issues.IssueImpactName]</div>
<div class="o" style="left:849px;top:636px;width:22px;height:19px"></div>
<div class="o" style="left:878px;top:636px;width:77px;height:19px"></div>
<div class="a nw" style="left:885.2px;top:638.02px;font-size:13.33px;line-height:13.33px;color:#000;font-weight:bold;font-style:italic;">Pilność</div>
<div class="o" style="left:954px;top:636px;width:237px;height:19px"></div>
<div class="a nw" style="left:960px;top:638.02px;font-size:13.33px;line-height:13.33px;color:#000;letter-spacing:0.1px;">[Issues.IssueUrgencyName]</div>
<div class="a" style="left:491px;top:671px;width:718px;height:3px;background:#666"></div>
<div class="a" style="left:491px;top:674px;width:718px;height:28px;background:#ebebeb"></div>
<div class="a nw" style="left:499px;top:681.06px;font-size:16px;line-height:16px;color:#000;font-weight:bold;font-style:italic;">Powiązane osoby</div>
<div class="o" style="left:491px;top:674px;width:719px;height:29px"></div>
<div class="o" style="left:491px;top:721px;width:20px;height:20px"></div>
<div class="o" style="left:519px;top:721px;width:133px;height:20px"></div>
<div class="a nw" style="left:525.5px;top:723.22px;font-size:13.33px;line-height:13.33px;color:#000;font-weight:bold;font-style:italic;letter-spacing:0.2px;">Zgłaszający</div>
<div class="o" style="left:651px;top:721px;width:182px;height:20px"></div>
<div class="a nw" style="left:657px;top:723.22px;font-size:13.33px;line-height:13.33px;color:#000;letter-spacing:0.15px;">[Issues.ReporterFullName]</div>
<div class="o" style="left:849px;top:721px;width:22px;height:20px"></div>
<div class="o" style="left:878px;top:721px;width:133px;height:20px"></div>
<div class="a nw" style="left:885.2px;top:723.22px;font-size:13.33px;line-height:13.33px;color:#000;font-weight:bold;font-style:italic;">Grupa opiekunów</div>
<div class="o" style="left:1010px;top:721px;width:181px;height:20px"></div>
<div class="a" style="left:1011px;top:720.7px;width:181px;height:19px;overflow:hidden"><div class="a nw" style="left:5px;top:2.5px;font-size:13.33px;line-height:13.33px;color:#000">[Issues.AssigneeGroupName]</div></div>
<div class="o" style="left:491px;top:749px;width:20px;height:20px"></div>
<div class="o" style="left:519px;top:749px;width:133px;height:20px"></div>
<div class="a nw" style="left:525.5px;top:751.32px;font-size:13.33px;line-height:13.33px;color:#000;font-weight:bold;font-style:italic;letter-spacing:0.2px;">Autor</div>
<div class="o" style="left:651px;top:749px;width:182px;height:20px"></div>
<div class="a nw" style="left:657px;top:751.32px;font-size:13.33px;line-height:13.33px;color:#000;letter-spacing:0.15px;">[Issues.AuthorFullName]</div>
<div class="o" style="left:849px;top:749px;width:22px;height:20px"></div>
<div class="o" style="left:878px;top:749px;width:133px;height:20px"></div>
<div class="a nw" style="left:885.2px;top:751.32px;font-size:13.33px;line-height:13.33px;color:#000;font-weight:bold;font-style:italic;">Opiekunowie</div>
<div class="o" style="left:1010px;top:749px;width:181px;height:20px"></div>
<div class="a" style="left:1011px;top:748.8px;width:181px;height:19px;overflow:hidden"><div class="a nw" style="left:5px;top:2.5px;font-size:13.33px;line-height:13.33px;color:#000">[Issues.AssigneePersonName]</div></div>
<div class="a" style="left:491px;top:795px;width:718px;height:3px;background:#666"></div>
<div class="a" style="left:491px;top:798px;width:718px;height:26px;background:#ebebeb"></div>
<div class="a nw" style="left:499px;top:803.96px;font-size:16px;line-height:16px;color:#000;font-weight:bold;font-style:italic;">Opis</div>
<div class="o" style="left:491px;top:798px;width:719px;height:27px"></div>
<div class="a nw" style="left:491px;width:718px;text-align:center;top:835.4px;font-size:13.33px;line-height:13.33px;color:#000;letter-spacing:0.15px;padding-left:3px">[Issues.Description]</div>
<div class="o" style="left:491px;top:833px;width:719px;height:21px"></div>
<div class="a nw" style="left:498.7px;top:897.86px;font-size:16px;line-height:16px;color:#000;font-weight:bold;">Uprawnienia / Dostępy</div>
<div class="o" style="left:491px;top:890px;width:719px;height:41px"></div>
<svg class="a" style="left:490px;top:549px" width="22" height="22" viewBox="490 549 22 22"><circle cx="500.4" cy="559.9" r="6.2" fill="none" stroke="#9a9a9a" stroke-width="5"/><g stroke="#000" stroke-width="3.3"><path d="M497.8,557.3 L494.2,553.7 M503,557.3 L506.6,553.7 M497.8,562.5 L494.2,566.1 M503,562.5 L506.6,566.1"/></g></svg>
<svg class="a" style="left:490px;top:578px" width="22" height="22" viewBox="490 578 22 22"><path d="M491.8,587 V581.5 H498.2 V583.5" fill="none" stroke="#9a9a9a" stroke-width="1.3"/><path d="M503.5,588.6 H508.6 V595 H502.8 V593" fill="none" stroke="#9a9a9a" stroke-width="1.3"/><rect x="495.8" y="583.8" width="9.2" height="9.2" rx="1.5" fill="#000"/></svg>
<svg class="a" style="left:490px;top:606px" width="22" height="22" viewBox="490 606 22 22"><rect x="492" y="608" width="3" height="17.6" rx="0.8" fill="#000"/><path d="M495,610 Q499,609 502,610 Q506,611 509.7,609.6 V622 Q506,623.3 502,622.3 Q498.5,621.3 495,622.3 Z" fill="#9a9a9a"/></svg>
<svg class="a" style="left:489px;top:634px" width="24" height="22" viewBox="489 634 24 22"><g font-family="Liberation Sans" font-weight="bold" font-size="6" fill="#000"><text x="490" y="641.5">1</text><text x="490" y="647.3">2</text><text x="490" y="653">3</text></g><path d="M497.2,639.2 H510 M497.2,645 H510 M497.2,650.9 H510" stroke="#9a9a9a" stroke-width="1.9"/></svg>
<svg class="a" style="left:848px;top:605px" width="23" height="23" viewBox="848 605 23 23"><g stroke-width="2.2"><path d="M851.2,608.2 L855.6,612.6" stroke="#000"/><path d="M868.2,608.2 L863.8,612.6" stroke="#9a9a9a"/><path d="M851.2,625.4 L855.6,621" stroke="#9a9a9a"/><path d="M868.2,625.4 L863.8,621" stroke="#000"/></g><path d="M858.3,615.5 H852.2 L858.3,609.4 Z" fill="#000"/><path d="M861.1,615.5 H867.2 L861.1,609.4 Z" fill="#9a9a9a"/><path d="M858.3,618.1 H852.2 L858.3,624.2 Z" fill="#9a9a9a"/><path d="M861.1,618.1 H867.2 L861.1,624.2 Z" fill="#000"/></svg>
<svg class="a" style="left:850px;top:633px" width="20" height="22" viewBox="850 633 20 22"><path d="M857,636.3 Q857,635.6 857.8,635.6 H861 Q861.8,635.6 861.8,636.3 L861,647.6 H857.8 Z" fill="#000"/><circle cx="859.4" cy="651.3" r="2.5" fill="#9a9a9a"/></svg>
<svg class="a" style="left:490px;top:719px" width="22" height="22" viewBox="490 719 22 22"><circle cx="497.5" cy="726.3" r="3.6" fill="#000"/><path d="M491,737.8 V734 Q491,730.6 494.5,730.6 H500.5 Q503.5,730.6 504,733 L503,737.8 Z" fill="#000"/><path d="M502,733 L505.5,730.8 L510,735 L506.5,738.5 L502.5,734.5 Z" fill="#9a9a9a" stroke="#fff" stroke-width="0.8"/></svg>
<svg class="a" style="left:490px;top:747px" width="22" height="22" viewBox="490 747 22 22"><circle cx="497.5" cy="754.2" r="3.6" fill="#000"/><path d="M491,765.8 V762 Q491,758.6 494.5,758.6 H500.5 Q503.5,758.6 503.8,760.5 L501,765.8 Z" fill="#000"/><path d="M501.5,765.5 L502.3,762.8 L507.6,757.5 L509.6,759.5 L504.3,764.8 Z" fill="#9a9a9a"/></svg>
<svg class="a" style="left:848px;top:719px" width="23" height="22" viewBox="848 719 23 22"><path d="M851.6,728 V723.9 H867.4 V728" fill="none" stroke="#9a9a9a" stroke-width="1.3"/><g fill="#000"><circle cx="852.9" cy="731" r="1.9"/><circle cx="859.4" cy="731" r="1.9"/><circle cx="866" cy="731" r="1.9"/><path d="M850.5,737.7 V735.6 Q850.5,734 852.9,734 Q855.3,734 855.3,735.6 V737.7 Z"/><path d="M857,737.7 V735.6 Q857,734 859.4,734 Q861.8,734 861.8,735.6 V737.7 Z"/><path d="M863.6,737.7 V735.6 Q863.6,734 866,734 Q868.4,734 868.4,735.6 V737.7 Z"/></g></svg>
<svg class="a" style="left:848px;top:747px" width="23" height="22" viewBox="848 747 23 22"><g fill="#9a9a9a"><circle cx="852.8" cy="755.8" r="1.9"/><circle cx="866" cy="755.8" r="1.9"/><path d="M850,762.5 V760 Q850,758.6 852.8,758.6 Q855.6,758.6 855.6,760 V762.5 Z"/><path d="M863.2,762.5 V760 Q863.2,758.6 866,758.6 Q868.8,758.6 868.8,760 V762.5 Z"/></g><circle cx="859.4" cy="754.7" r="3.1" fill="#000"/><path d="M854,765.2 V762.5 Q854,759.4 857,759.4 H861.8 Q864.8,759.4 864.8,762.5 V765.2 Z" fill="#000" stroke="#fff" stroke-width="0.7"/></svg>
<div class="a" style="left:698px;top:435px;width:118px;height:59px;border:4.3px solid #8fd641;border-radius:8px;box-shadow:0 1px 5px rgba(0,0,0,0.35), inset 0 2px 6px rgba(0,0,0,0.28)"></div>
<div class="a" style="left:754.5px;top:444px;width:2px;height:18px;background:#c0504d"></div>
<div class="a" style="left:750.2px;top:438.6px;width:10.4px;height:10.4px;border-radius:50%;background:#c0504d"></div>
<div class="a" style="left:702.7px;top:457.3px;width:10.4px;height:10.4px;border-radius:50%;background:#c0504d"></div>
<div class="a" style="left:750.2px;top:457.3px;width:10.4px;height:10.4px;border-radius:50%;background:#c0504d"></div>
<div class="a" style="left:797.7px;top:457.3px;width:10.4px;height:10.4px;border-radius:50%;background:#c0504d"></div>
<div class="a" style="left:702.7px;top:476.3px;width:10.4px;height:10.4px;border-radius:50%;background:#c0504d"></div>
<div class="a" style="left:750.2px;top:476.3px;width:10.4px;height:10.4px;border-radius:50%;background:#c0504d"></div>
<div class="a" style="left:797.7px;top:476.3px;width:10.4px;height:10.4px;border-radius:50%;background:#c0504d"></div>
<div class="a" style="left:490px;top:320px;width:720px;height:2px;background:repeating-linear-gradient(90deg,#8c8c8c 0 3.6px,transparent 3.6px 5.7px)"></div>
<div class="a" style="left:1208px;top:320px;width:2px;height:599px;background:repeating-linear-gradient(180deg,#8c8c8c 0 3.8px,transparent 3.8px 6px)"></div>
<div class="a" style="left:490px;top:320px;width:2px;height:599px;background:repeating-linear-gradient(180deg,#8c8c8c 0 3.8px,transparent 3.8px 6px)"></div>

<!-- SCROLLBAR -->
<div class="a" style="left:1903px;top:0;width:17px;height:919px;background:#f1f1f1"></div>
<div class="a" style="left:1905px;top:17px;width:13px;height:688px;background:#c1c1c1"></div>
<div class="a" style="left:1907px;top:7px;width:0;height:0;border-left:4px solid transparent;border-right:4px solid transparent;border-bottom:4px solid #a3a3a3"></div>
<div class="a" style="left:1907px;top:908px;width:0;height:0;border-left:4px solid transparent;border-right:4px solid transparent;border-top:4px solid #505050"></div>
</body></html>
